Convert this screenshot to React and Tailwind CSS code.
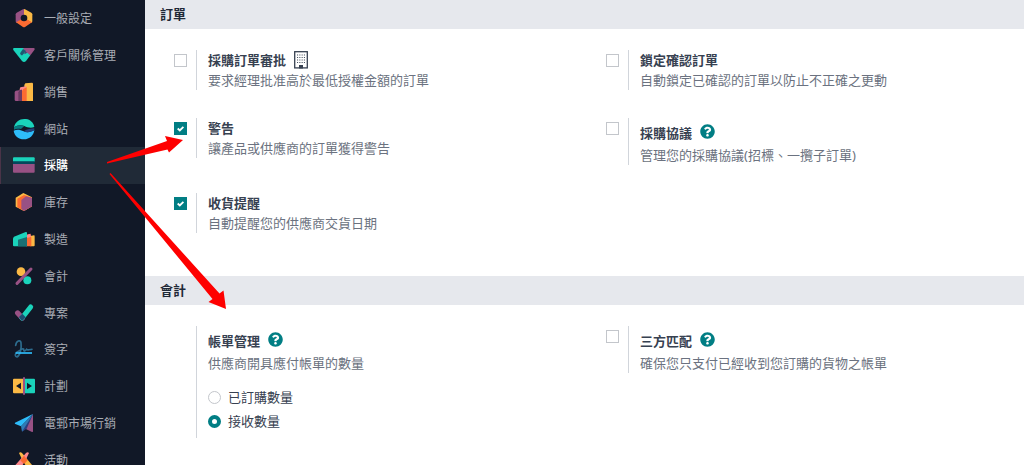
import { useState } from "react";
import { FaQuestionCircle } from "react-icons/fa";

const icons = {
  general: (
    <>
      <path d="M33 6 V33 L10 47 Q8 45 8 42 V22 Q8 19 11 17 L30 7 Z" fill="#985184" />
      <path d="M33 6 V33 L56 47 Q58 45 58 42 V22 Q58 19 55 17 L36 7 Z" fill="#fbb945" />
      <path d="M9 46 L33 32 L57 46 L36 60 Q33 62 30 60 Z" fill="#fc6b32" />
      <circle cx="33" cy="33" r="10" fill="#111827" />
    </>
  ),
  crm: (
    <>
      <path d="M3 12 H40 L52 34 L39 51 Q33 57 27 51 L1 18 Q-1 12 3 12 Z" fill="#1ad3bb" />
      <path d="M30 12 H62 Q67 13 64 18 L52 34 L36 21 Z" fill="#985184" />
      <path d="M30 15 L39 21 L28 34 Q23 35 21 28 Z" fill="#1b5a72" />
      <path d="M36 21 L43 26 L34 31 Z" fill="#4f3a6e" />
    </>
  ),
  sales: (
    <>
      <path d="M37 7 L57 5 Q60 5 60 9 V60 H34 V12 Z" fill="#fbb945" />
      <path d="M22 19 L40 16 V60 H20 V24 Z" fill="#fc868b" />
      <path d="M31 24 L41 19 V60 H27 V30 Z" fill="#fc6b32" />
      <path d="M8 29 L27 26 V60 H9 Q5 60 5 56 V33 Z" fill="#985184" />
      <path d="M20 27 L27 26 V60 H16 V34 Z" fill="#6b3a63" />
    </>
  ),
  website: (
    <>
      <path d="M3 28 C7 8 25 -1 44 4 C55 8 63 17 64 27 C53 31 43 28 34 24 C24 20 13 21 3 28 Z" fill="#1ad3bb" />
      <path d="M3 28 C13 21 24 20 34 24 L24 33 C16 31 9 32 3 35 Z" fill="#087b82" />
      <path d="M2 38 C12 33 22 35 32 40 C43 45 54 42 64 36 C62 52 50 64 33 64 C16 64 4 53 2 38 Z" fill="#2ebcfa" />
      <path d="M32 40 C43 33 53 32 64 31 V37 C54 42 43 45 32 40 Z" fill="#23407a" />
    </>
  ),
  purchase: (
    <>
      <path d="M3 10 H62 Q65 10 65 13 V23 H0 V13 Q0 10 3 10 Z" fill="#1ad3bb" />
      <path d="M0 22 H65 V31 H0 Z" fill="#04475c" />
      <path d="M0 30 H65 V53 Q65 56 62 56 H3 Q0 56 0 53 Z" fill="#985184" />
    </>
  ),
  inventory: (
    <>
      <path d="M31 6 L57 19 V46 L33 60 L8 47 V20 Z" fill="#fbb945" />
      <path d="M33 12 L57 20 V46 L33 60 L13 49 V23 Z" fill="#fc6b32" />
      <path d="M39 16 L57 20 V46 L33 60 L25 53 V27 Z" fill="#985184" />
    </>
  ),
  manufacturing: (
    <>
      <path d="M52 24 L63 22 Q65 22 65 26 V52 Q65 55 62 55 H52 Z" fill="#fbb945" />
      <path d="M40 21 L52 17 L55 29 V55 H40 Z" fill="#fc6b32" />
      <path d="M40 21 L52 17 L54 27 L41 30 Z" fill="#fc868b" />
      <path d="M3 26 L38 12 Q42 11 42 15 V55 H3 Q0 55 0 52 V31 Z" fill="#1ad3bb" />
      <path d="M15 35 L42 27 V55 H15 Z" fill="#1a6f73" />
    </>
  ),
  accounting: (
    <>
      <circle cx="24" cy="20" r="13" fill="#fbb945" />
      <circle cx="43" cy="46" r="12" fill="#1ad3bb" />
      <path d="M12 55 L54 12" stroke="#985184" strokeWidth="9" strokeLinecap="round" />
    </>
  ),
  project: (
    <>
      <path d="M14 33 L28 48" stroke="#985184" strokeWidth="16" strokeLinecap="round" />
      <path d="M27 48 L53 15" stroke="#1ad3bb" strokeWidth="15" strokeLinecap="round" />
      <path d="M18 45 L28 35 L38 46 L30 55 Q27 57 24 54 Z" fill="#1d4d70" />
    </>
  ),
  sign: (
    <>
      <path
        d="M8 22 C10 8 22 4 24 14 C26 30 22 52 12 57 C4 56 6 44 16 40 C24 37 28 29 32 33 C32 42 36 40 41 34 C44 38 48 34 57 34"
        fill="none"
        stroke="#2d6c8e"
        strokeWidth="5"
        strokeLinecap="round"
      />
      <path d="M8 45 H57" stroke="#2ebcfa" strokeWidth="5" />
    </>
  ),
  planning: (
    <>
      <rect y="11" width="33" height="44" rx="3" fill="#fbb945" />
      <rect x="33" y="11" width="33" height="44" rx="3" fill="#1ad3bb" />
      <rect x="30" y="6" width="6" height="54" rx="3" fill="#985184" />
      <path d="M24 23 V43 L9 33 Z M42 23 V43 L57 33 Z" fill="#111827" />
    </>
  ),
  mailing: (
    <>
      <path d="M60 6 V58 Q60 61 57 60 L34 49 Z" fill="#985184" />
      <path d="M60 6 L6 32 Q4 34 7 36 L24 43 Z" fill="#2ebcfa" />
      <path d="M60 6 L24 43 L27 59 L39 48 Z" fill="#2f7bb5" />
      <path d="M60 6 L27 59 L41 50 Z" fill="#2b3f80" />
    </>
  ),
  events: (
    <>
      <path d="M18 12 Q22 8 27 12 L62 54 Q60 58 54 58 H40 Z" fill="#fbb945" />
      <path d="M48 12 Q44 8 39 12 L2 54 Q4 58 10 58 H26 Z" fill="#fc868b" />
      <path d="M33 20 L44 34 L33 46 L22 34 Z" fill="#fc6b32" />
      <path d="M33 42 L44 58 H22 Z" fill="#111827" />
    </>
  ),
};

const apps = [
  { id: "general", label: "一般設定" },
  { id: "crm", label: "客戶關係管理" },
  { id: "sales", label: "銷售" },
  { id: "website", label: "網站" },
  { id: "purchase", label: "採購" },
  { id: "inventory", label: "庫存" },
  { id: "manufacturing", label: "製造" },
  { id: "accounting", label: "會計" },
  { id: "project", label: "專案" },
  { id: "sign", label: "簽字" },
  { id: "planning", label: "計劃" },
  { id: "mailing", label: "電郵市場行銷" },
  { id: "events", label: "活動" },
];

function AppLink({ app, active }) {
  return (
    <a
      href={`#${app.id}`}
      className={
        active
          ? "flex items-center gap-[9px] border-l border-[#4a3448] bg-[#202a37] pl-3 text-white font-medium"
          : "flex items-center gap-[9px] border-l border-transparent pl-3 text-[#a9adb5]"
      }
    >
      <svg viewBox="0 0 66 66" className="size-[22px] shrink-0" aria-hidden="true">
        {icons[app.id]}
      </svg>
      <span className="pt-0.5">{app.label}</span>
    </a>
  );
}

function BuildingIcon() {
  return (
    <svg viewBox="0 0 14 18" className="h-[18px] w-[14px] shrink-0" aria-hidden="true">
      <rect x="0.7" y="0.7" width="12.6" height="16.2" fill="none" stroke="#374151" strokeWidth="1.3" />
      <path d="M3 4 H11 M3 6.5 H11 M3 9 H11 M3 11.5 H11" stroke="#4b5563" strokeWidth="1.1" strokeDasharray="1.1 1.2" />
      <path d="M5 17.5 V14 H9 V17.5 Z" fill="#374151" />
    </svg>
  );
}

function HelpLink() {
  return (
    <a href="#help" aria-label="?" className="mb-0.5 text-[#017e84]">
      <FaQuestionCircle className="size-[15px]" />
    </a>
  );
}

function Section({ title, children }) {
  return (
    <section>
      <h2 className="bg-[#e6e8ed] px-[15px] leading-[29px] font-bold text-[#1f2937]">{title}</h2>
      <div className="grid grid-cols-2 items-start gap-y-7 pt-[21px] pb-[43px] pl-[15px]">{children}</div>
    </section>
  );
}

function Setting({ id, title, description, checkbox = true, checked = false, help, building, children }) {
  const [on, setOn] = useState(checked);

  return (
    <div className="flex pl-[14px]">
      <div className="w-[22px] shrink-0 pt-1">
        {checkbox && (
          <span className="relative block size-[13px]">
            <input
              id={id}
              type="checkbox"
              checked={on}
              onChange={(e) => setOn(e.target.checked)}
              className="block size-[13px] appearance-none border border-[#c3c6cb] bg-white checked:border-[#017e84] checked:bg-[#017e84]"
            />
            {on && (
              <svg viewBox="0 0 13 13" className="pointer-events-none absolute inset-0" aria-hidden="true">
                <path d="M3.7 6.5 L5.8 8.5 L9.4 4.9" fill="none" stroke="#fff" strokeWidth="1.8" />
              </svg>
            )}
          </span>
        )}
      </div>
      <div className="border-l border-[#d1d5db] pl-[11px]">
        <div className={help ? "flex h-[27px] items-center gap-2 pt-0.5" : "flex h-5 items-center gap-2"}>
          {checkbox ? (
            <label htmlFor={id} className="font-bold text-[#374151]">{title}</label>
          ) : (
            <h3 id={id} className="font-bold text-[#374151]">{title}</h3>
          )}
          {building && <BuildingIcon />}
          {help && <HelpLink />}
        </div>
        <p className="text-[#6b7280]">{description}</p>
        {children}
      </div>
    </div>
  );
}

function BillOption({ label, value, selected, onSelect }) {
  return (
    <label className="flex h-6 items-center gap-[7px] text-[#374151]">
      <input
        type="radio"
        name="bill-control"
        value={value}
        checked={selected === value}
        onChange={() => onSelect(value)}
        className="size-[13px] appearance-none rounded-full border border-[#c3c6cb] bg-white checked:border-4 checked:border-[#017e84]"
      />
      {label}
    </label>
  );
}

export default function App() {
  const [billControl, setBillControl] = useState("received");

  return (
    <div className="relative flex h-screen overflow-hidden bg-white font-['Noto_Sans','Noto_Sans_CJK_TC',sans-serif] text-[13px] leading-5">
      <aside className="w-[145px] shrink-0 bg-[#111827] text-xs">
        <nav className="grid min-h-[478px] auto-rows-fr">
          {apps.map((app) => (
            <AppLink key={app.id} app={app} active={app.id === "purchase"} />
          ))}
        </nav>
      </aside>

      <main className="flex-1">
        <Section title="訂單">
          <Setting id="approval" title="採購訂單審批" description="要求經理批准高於最低授權金額的訂單" building />
          <Setting id="lock" title="鎖定確認訂單" description="自動鎖定已確認的訂單以防止不正確之更動" />
          <Setting id="warnings" title="警告" description="讓產品或供應商的訂單獲得警告" checked />
          <Setting id="agreements" title="採購協議" description="管理您的採購協議(招標、一攬子訂單)" help />
          <Setting id="reminder" title="收貨提醒" description="自動提醒您的供應商交貨日期" checked />
        </Section>

        <Section title="會計">
          <Setting id="bill" title="帳單管理" description="供應商開具應付帳單的數量" checkbox={false} help>
            <div role="radiogroup" aria-labelledby="bill" className="mt-3 pb-[5px]">
              <BillOption label="已訂購數量" value="ordered" selected={billControl} onSelect={setBillControl} />
              <BillOption label="接收數量" value="received" selected={billControl} onSelect={setBillControl} />
            </div>
          </Setting>
          <Setting id="matching" title="三方匹配" description="確保您只支付已經收到您訂購的貨物之帳單" help />
        </Section>
      </main>

      {/* arrows from the purchase tab to the settings */}
      <svg viewBox="0 0 240 320" className="pointer-events-none absolute top-0 left-0 h-80 w-60" aria-hidden="true">
        <path d="M107 162 L167 141 L165 136 L183 140 L169 152.5 L167.5 149.5 L107 163.5 Z" fill="#fe0000" />
        <path d="M110.5 173 L219.5 293.5 L223.5 290.5 L226 309 L208.5 302 L212.5 299 L109.5 174 Z" fill="#fe0000" />
      </svg>
    </div>
  );
}
